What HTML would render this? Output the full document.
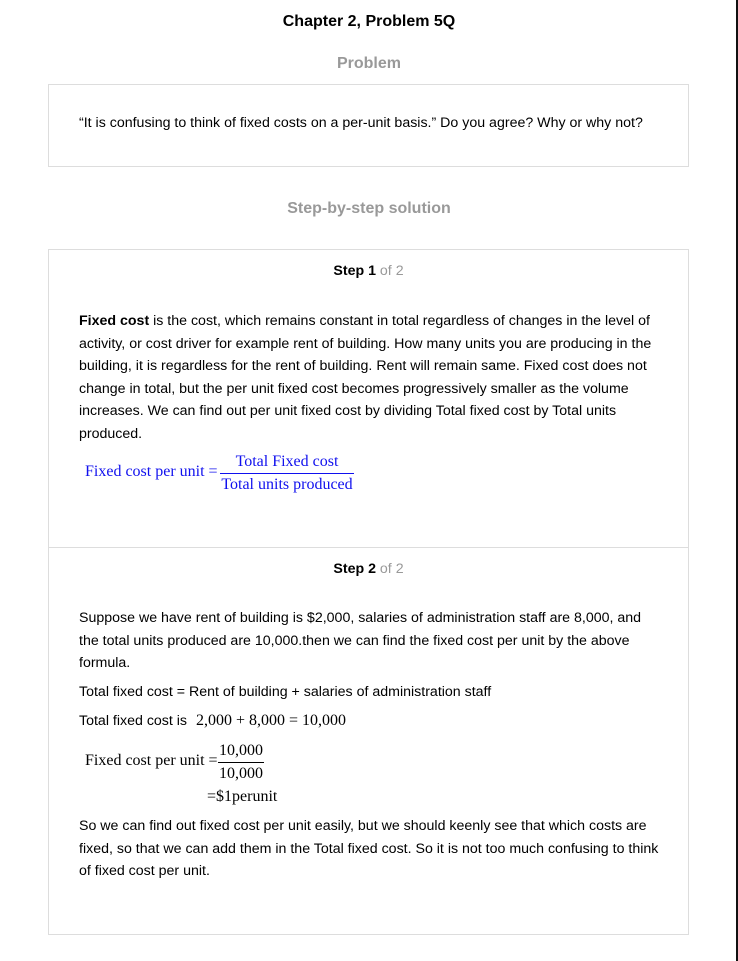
<!DOCTYPE html>
<html><head><style>
body{margin:0;width:738px;height:961px;overflow:hidden;background:#fff;font-family:"Liberation Sans",Arial,sans-serif;color:#000;position:relative}
.vl{position:absolute;left:736px;top:0;width:2px;height:961px;background:#111}
.abs{position:absolute}
.title{left:0;width:738px;text-align:center;top:13px;font-weight:bold;font-size:16px}
.gh{left:0;width:738px;text-align:center;font-weight:bold;font-size:16px;color:#999}
.box{left:48px;width:639px;border:1px solid #ddd}
p{margin:0}
.t{font-size:14.2px;line-height:22.5px}
.m{font-family:"Liberation Serif",serif;font-size:16px}
.blue{color:#1010ee}
.step{left:48px;width:641px;text-align:center;font-size:14.2px;font-weight:bold}
.step span{font-weight:normal;color:#999}
</style></head><body>
<div class="vl"></div>
<div class="abs title">Chapter 2, Problem 5Q</div>
<div class="abs gh" style="top:55px">Problem</div>
<div class="abs box" style="top:84px;height:81px"></div>
<div class="abs t" style="left:79px;top:112px">“It is confusing to think of fixed costs on a per-unit basis.” Do you agree? Why or why not?</div>
<div class="abs gh" style="top:200px">Step-by-step solution</div>
<div class="abs box" style="top:249px;height:684px"></div>
<div class="abs" style="left:49px;width:639px;top:547px;height:1px;background:#ddd"></div>
<div class="abs step" style="top:263px">Step 1 <span>of 2</span></div>
<div class="abs t" style="left:79px;top:310px;width:585px"><b>Fixed cost</b> is the cost, which remains constant in total regardless of changes in the level of activity, or cost driver for example rent of building. How many units you are producing in the building, it is regardless for the rent of building. Rent will remain same. Fixed cost does not change in total, but the per unit fixed cost becomes progressively smaller as the volume increases. We can find out per unit fixed cost by dividing Total fixed cost by Total units produced.</div>
<div class="abs m blue" style="left:85px;top:463px">Fixed cost per unit =</div>
<div class="abs m blue" style="left:220px;top:453px;width:134px;text-align:center">Total Fixed cost</div>
<div class="abs" style="left:220px;top:473px;width:134px;height:1px;background:#1010ee"></div>
<div class="abs m blue" style="left:220px;top:476px;width:134px;text-align:center">Total units produced</div>
<div class="abs step" style="top:561px">Step 2 <span>of 2</span></div>
<div class="abs t" style="left:79px;top:607px;width:585px">Suppose we have rent of building is $2,000, salaries of administration staff are 8,000, and the total units produced are 10,000.then we can find the fixed cost per unit by the above formula.</div>
<div class="abs t" style="left:79px;top:681px">Total fixed cost = Rent of building + salaries of administration staff</div>
<div class="abs t" style="left:79px;top:710px">Total fixed cost is <span class="m" style="margin-left:5px">2,000 + 8,000 = 10,000</span></div>
<div class="abs m" style="left:85px;top:752px">Fixed cost per unit =</div>
<div class="abs m" style="left:219px;top:742px">10,000</div>
<div class="abs" style="left:218px;top:762px;width:46px;height:1px;background:#000"></div>
<div class="abs m" style="left:219px;top:765px">10,000</div>
<div class="abs m" style="left:207px;top:788px">=$1perunit</div>
<div class="abs t" style="left:79px;top:815px;width:585px">So we can find out fixed cost per unit easily, but we should keenly see that which costs are fixed, so that we can add them in the Total fixed cost. So it is not too much confusing to think of fixed cost per unit.</div>
</body></html>
